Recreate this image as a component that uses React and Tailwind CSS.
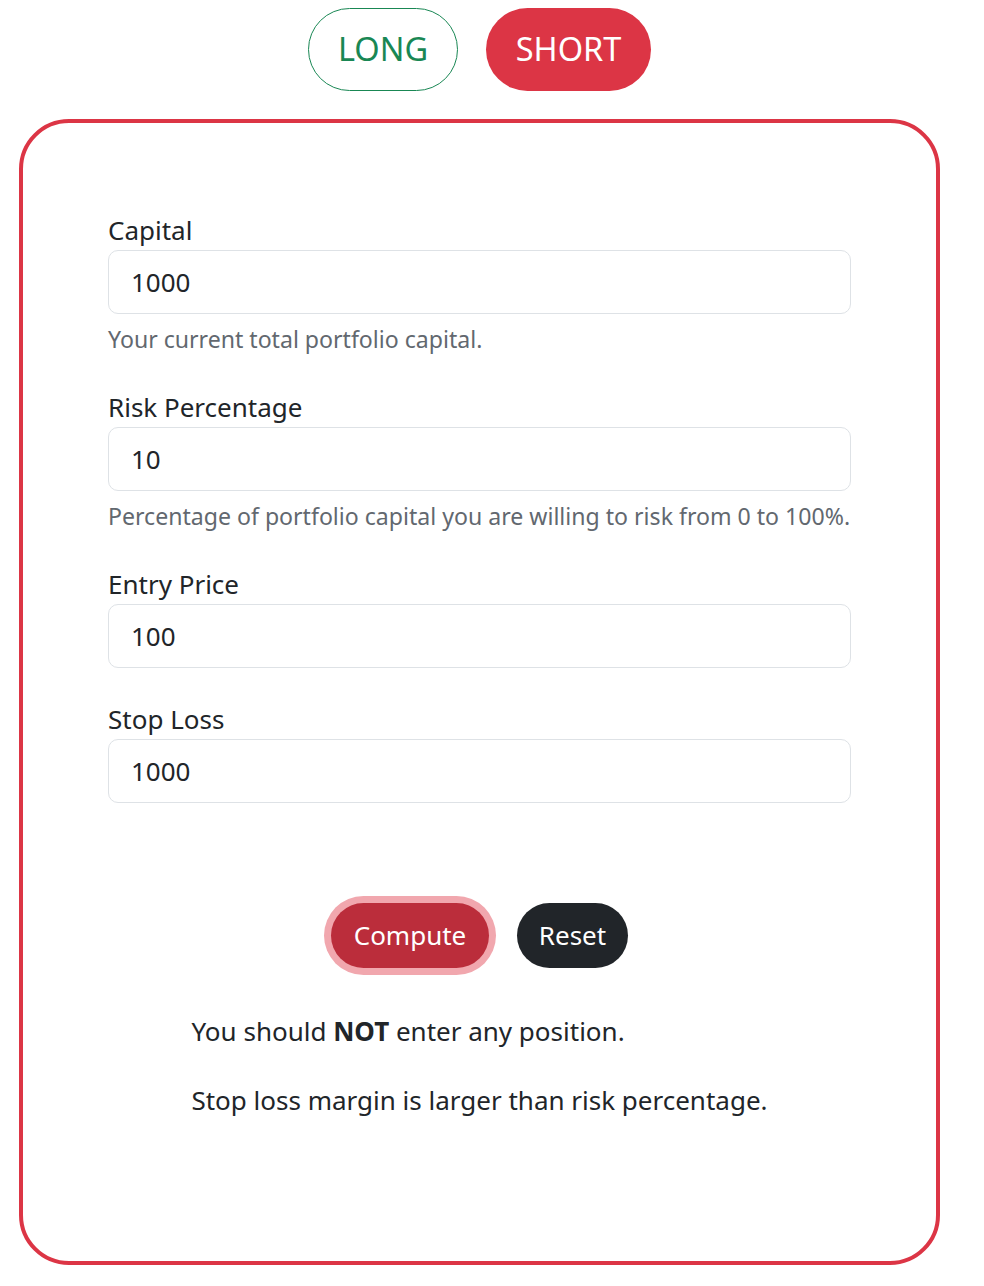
import React from 'react';

const font = { fontFamily: '"Noto Sans", "Open Sans", sans-serif' };

const Field = ({ label, value, help, first }) => (
    <div className={first ? '' : 'mt-[32px]'}>
        <label className="block text-[26px] leading-[39px] text-[#212529]">{label}</label>
        <input
            readOnly
            value={value}
            className="block w-full h-[64px] px-[22px] text-[26px] text-[#212529] bg-white border border-[#dee2e6] rounded-[10px] outline-none"
        />
        {help && (
            <div className="mt-[8px] text-[23.1px] leading-[34px] text-[#62686f] whitespace-nowrap">{help}</div>
        )}
    </div>
);

const App = () => (
    <div className="w-[921px] ml-[19px] bg-white" style={font}>
        <div className="pt-[8px] flex justify-center gap-[28px]">
            <button className="h-[83px] w-[150px] rounded-full border border-[#198754] text-[#198754] text-[32.5px]">
                LONG
            </button>
            <button className="h-[83px] w-[165px] rounded-full bg-[#dc3545] text-white text-[32.5px]">
                SHORT
            </button>
        </div>

        <div className="mt-[28px] border-4 border-[#dc3545] rounded-[50px] px-[85px] pt-[88px] pb-[141px]">
            <Field first label="Capital" value="1000" help="Your current total portfolio capital." />
            <Field
                label="Risk Percentage"
                value="10"
                help="Percentage of portfolio capital you are willing to risk from 0 to 100%."
            />
            <Field label="Entry Price" value="100" />
            <Field label="Stop Loss" value="1000" />

            <div className="mt-[100px] flex justify-center gap-[28px]">
                <button className="h-[65px] w-[158px] rounded-full bg-[#bb2d3b] text-white text-[26px] ring-[7px] ring-[#f1a7ae]">
                    Compute
                </button>
                <button className="h-[65px] w-[111px] rounded-full bg-[#212529] text-white text-[26px]">
                    Reset
                </button>
            </div>

            <div className="mt-[44px] mx-auto w-fit text-[26px] leading-[39px] text-[#212529]">
                <p>You should <b>NOT</b> enter any position.</p>
                <p className="mt-[30px]">Stop loss margin is larger than risk percentage.</p>
            </div>
        </div>
    </div>
);

export default App;
